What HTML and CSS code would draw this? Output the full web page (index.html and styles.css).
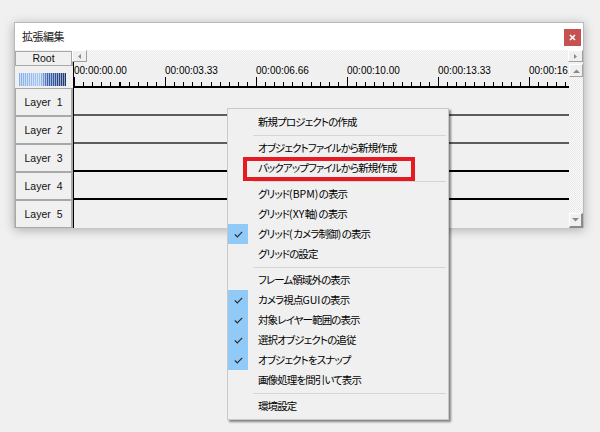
FILE: index.html
```html
<!DOCTYPE html>
<html lang="ja">
<head>
    <meta charset="UTF-8">
    <title>拡張編集</title>
    <link rel="stylesheet" href="styles.css">
</head>
<body>
    <div class="desk">
        <div class="window">
            <div class="titlebar">
                <span class="title">拡張編集</span>
                <div class="close">
                    <svg width="7" height="7" viewBox="0 0 7 7"><path d="M1 1L6 6M6 1L1 6" stroke="#fff" stroke-width="1.6"/></svg>
                </div>
            </div>
            <div class="editor">
                <div class="side">
                    <div class="root">Root</div>
                    <div class="meter"></div>
                    <div class="layer">Layer 1</div>
                    <div class="layer">Layer 2</div>
                    <div class="layer">Layer 3</div>
                    <div class="layer">Layer 4</div>
                    <div class="layer">Layer 5</div>
                </div>
                <div class="hscroll">
                    <div class="arrow"><svg width="5" height="5" viewBox="0 0 5 5"><path d="M4 0V5L1 2.5Z" fill="#8a8a8a"/></svg></div>
                    <div class="track"></div>
                    <div class="arrow"><svg width="5" height="5" viewBox="0 0 5 5"><path d="M1 0V5L4 2.5Z" fill="#8a8a8a"/></svg></div>
                </div>
                <div class="ruler">
                    <span>00:00:00.00</span>
                    <span>00:00:03.33</span>
                    <span>00:00:06.66</span>
                    <span>00:00:10.00</span>
                    <span>00:00:13.33</span>
                    <span>00:00:16.66</span>
                </div>
                <div class="rows">
                    <div class="row gray"></div>
                    <div class="row gray"></div>
                    <div class="row"></div>
                    <div class="row"></div>
                    <div class="row last"></div>
                </div>
                <div class="vscroll">
                    <div class="arrow"><svg width="7" height="4" viewBox="0 0 7 4"><path d="M0 4H7L3.5 0.5Z" fill="#8a8a8a"/></svg></div>
                    <div class="track"></div>
                    <div class="arrow down"><svg width="7" height="4" viewBox="0 0 7 4"><path d="M0 0H7L3.5 3.5Z" fill="#8a8a8a"/></svg></div>
                </div>
            </div>
        </div>

        <div class="menu">
            <div class="item">新規プロジェクトの作成</div>
            <div class="sep"></div>
            <div class="item">オブジェクトファイルから新規作成</div>
            <div class="item">バックアップファイルから新規作成<div class="mark-box"></div></div>
            <div class="sep"></div>
            <div class="item">グリッド<span class="lat">(BPM)</span>の表示</div>
            <div class="item">グリッド<span class="lat">(XY</span>軸<span class="lat">)</span>の表示</div>
            <div class="item checked"><span class="check"><svg width="9" height="7" viewBox="0 0 9 7"><path d="M0.8 3.4L3.3 5.9L8.2 0.9" fill="none" stroke="#2b2b2b" stroke-width="1.2"/></svg></span>グリッド<span class="lat">(</span>カメラ制御<span class="lat">)</span>の表示</div>
            <div class="item">グリッドの設定</div>
            <div class="sep"></div>
            <div class="item">フレーム領域外の表示</div>
            <div class="item checked"><span class="check"><svg width="9" height="7" viewBox="0 0 9 7"><path d="M0.8 3.4L3.3 5.9L8.2 0.9" fill="none" stroke="#2b2b2b" stroke-width="1.2"/></svg></span>カメラ視点<span class="lat">GUI</span>の表示</div>
            <div class="item checked"><span class="check"><svg width="9" height="7" viewBox="0 0 9 7"><path d="M0.8 3.4L3.3 5.9L8.2 0.9" fill="none" stroke="#2b2b2b" stroke-width="1.2"/></svg></span>対象レイヤー範囲の表示</div>
            <div class="item checked"><span class="check"><svg width="9" height="7" viewBox="0 0 9 7"><path d="M0.8 3.4L3.3 5.9L8.2 0.9" fill="none" stroke="#2b2b2b" stroke-width="1.2"/></svg></span>選択オブジェクトの追従</div>
            <div class="item checked"><span class="check"><svg width="9" height="7" viewBox="0 0 9 7"><path d="M0.8 3.4L3.3 5.9L8.2 0.9" fill="none" stroke="#2b2b2b" stroke-width="1.2"/></svg></span>オブジェクトをスナップ</div>
            <div class="item">画像処理を間引いて表示</div>
            <div class="sep"></div>
            <div class="item">環境設定</div>
        </div>
    </div>
</body>
</html>
```

FILE: styles.css
```css
body {
    margin: 0;
    background: #f0f0f0;
    font-family: "Liberation Sans", Arial, sans-serif;
}

.desk {
    position: relative;
    width: 600px;
    height: 432px;
    padding: 22px 0 0 14px;
    box-sizing: border-box;
}

.window {
    width: 568px;
    border: 1px solid #b9b9b9;
    border-bottom: none;
    background: #f0f0f0;
    box-shadow: 0 2px 10px rgba(0, 0, 0, 0.28);
}

.titlebar {
    height: 27px;
    background: #fff;
    display: flex;
    align-items: flex-start;
    justify-content: space-between;
}

.title {
    font-family: "Noto Sans CJK JP", sans-serif;
    font-size: 11px;
    line-height: 12px;
    letter-spacing: -0.5px;
    margin: 7px 0 0 7px;
    color: #222;
}

.close {
    width: 17px;
    height: 17px;
    margin: 6px 2px 0 0;
    background: #c75050;
    display: flex;
    align-items: center;
    justify-content: center;
}

.editor {
    display: grid;
    grid-template-columns: 58px 496px 14px;
    grid-template-rows: 12px 26px 140px;
}

.side {
    grid-column: 1;
    grid-row: 1 / 4;
    display: flex;
    flex-direction: column;
}

.root {
    height: 13px;
    margin-top: 1px;
    border: 1px solid #a8a8a8;
    border-right-width: 2px;
    font-size: 10.5px;
    line-height: 13px;
    text-align: center;
    color: #111;
}

.meter {
    height: 13px;
    margin: 7px 7px 2px 4px;
    background:
        repeating-linear-gradient(to right, transparent 0 1px, rgba(255, 255, 255, 0.55) 1px 2px),
        linear-gradient(to right, #86afe8, #a9c6f0 45%, #3d64b0 60%, #1c3472);
}

.layer {
    height: 26px;
    border: 1px solid #a8a8a8;
    border-right-width: 2px;
    font-size: 10.5px;
    line-height: 27px;
    word-spacing: 3px;
    text-align: center;
    color: #111;
}

.hscroll {
    grid-column: 2 / 4;
    grid-row: 1;
    display: flex;
    margin-left: -1px;
}

.arrow {
    width: 13px;
    height: 10px;
    background: #f0f0f0;
    border-top: 1px solid #fff;
    border-left: 1px solid #fff;
    border-right: 1px solid #a0a0a0;
    border-bottom: 1px solid #a0a0a0;
    display: flex;
    align-items: center;
    justify-content: center;
}

.track {
    flex: 1;
    background: repeating-conic-gradient(#fbfbfb 0 25%, #e8e8e8 0 50%) 0 0 / 2px 2px;
}

.ruler {
    grid-column: 2;
    grid-row: 2;
    display: flex;
    border-left: 1px solid #000;
    padding-top: 3px;
    box-sizing: border-box;
    overflow: hidden;
    background:
        linear-gradient(#000, #000) left bottom / 100% 2px no-repeat,
        repeating-linear-gradient(to right, #000 0 1px, transparent 1px 91px) left bottom / 100% 11px no-repeat,
        repeating-linear-gradient(to right, #000 0 1px, transparent 1px 9.1px) left bottom / 100% 6px no-repeat;
}

.ruler span {
    flex: 0 0 91px;
    font-size: 10px;
    line-height: 12px;
    color: #000;
    white-space: nowrap;
}

.rows {
    grid-column: 2;
    grid-row: 3;
    border-left: 1px solid #000;
}

.row {
    height: 26px;
    border-bottom: 2px solid #000;
}

.row.gray {
    border-bottom-color: #5c5c5c;
}

.row.last {
    height: 28px;
    border-bottom: none;
}

.vscroll {
    grid-column: 3;
    grid-row: 2 / 4;
    display: flex;
    flex-direction: column;
    padding-top: 2px;
}

.vscroll .arrow {
    width: 12px;
    height: 11px;
}

.vscroll .arrow.down {
    border-right: 2px solid #8a8a8a;
    border-bottom: 2px solid #8a8a8a;
    width: 11px;
    height: 12px;
}

.menu {
    position: absolute;
    left: 227px;
    top: 108px;
    width: 220px;
    padding: 3px 0;
    background: #f0f0f0;
    border: 1px solid #c9c9c9;
    box-shadow: 2px 2px 2px rgba(0, 0, 0, 0.45);
    font-family: "Noto Sans CJK JP", sans-serif;
    font-size: 10.5px;
    letter-spacing: -0.9px;
    font-feature-settings: "palt";
    color: #000;
}

.item {
    position: relative;
    height: 20px;
    line-height: 20px;
    padding-left: 30px;
    white-space: nowrap;
}

.lat {
    letter-spacing: 0;
    margin-right: 0.5px;
}

.check {
    position: absolute;
    left: 0;
    top: 0;
    width: 20px;
    height: 20px;
    background: #91c9f7;
    display: flex;
    align-items: center;
    justify-content: center;
}

.sep {
    height: 6px;
    display: flex;
    align-items: center;
    margin: 0 2px 0 25px;
}

.sep::after {
    content: "";
    flex: 1;
    height: 1px;
    background: #d5d5d5;
}

.mark-box {
    position: absolute;
    left: 15px;
    top: -1px;
    width: 164px;
    height: 16px;
    border: 4px solid #e51a22;
}
```
